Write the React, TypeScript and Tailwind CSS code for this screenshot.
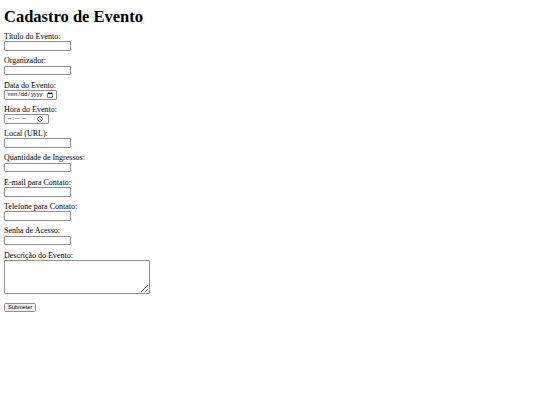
import React from 'react';

const fields: { label: string; type: string; w: string }[] = [
  { label: 'Título do Evento:', type: 'text', w: 'w-[67px]' },
  { label: 'Organizador:', type: 'text', w: 'w-[67px]' },
  { label: 'Data do Evento:', type: 'date', w: 'w-[53px]' },
  { label: 'Hora do Evento:', type: 'time', w: 'w-[45px]' },
  { label: 'Local (URL):', type: 'url', w: 'w-[67px]' },
  { label: 'Quantidade de Ingressos:', type: 'number', w: 'w-[67px]' },
  { label: 'E-mail para Contato:', type: 'email', w: 'w-[67px]' },
  { label: 'Telefone para Contato:', type: 'tel', w: 'w-[67px]' },
  { label: 'Senha de Acesso:', type: 'password', w: 'w-[67px]' },
];

export default function App() {
  return (
    <div className="min-h-[405px] w-[540px] bg-white px-[4px] pt-[8px] text-black font-['Liberation_Serif',serif]">
      <h1 className="text-[16.5px] font-bold leading-[18px]">Cadastro de Evento</h1>
      <form className="mt-[6px] flex flex-col" onSubmit={(e) => e.preventDefault()}>
        {fields.map((f) => (
          <div key={f.label} className="mb-[5.3px] flex flex-col items-start">
            <label className="text-[8px] leading-[9.2px]">{f.label}</label>
            <input
              type={f.type}
              className={`${f.w} h-[9.8px] border border-[#8f8f8f] rounded-[1px] bg-white px-[1.5px] text-[5.8px] leading-none font-['Liberation_Sans',sans-serif]`}
            />
          </div>
        ))}
        <div className="flex flex-col items-start">
          <label className="text-[8px] leading-[9.2px]">Descrição do Evento:</label>
          <textarea className="h-[34.5px] w-[145.5px] border border-[#8f8f8f] rounded-[1px] bg-white" />
        </div>
        <div className="mt-[8.5px] flex items-start">
          <button
            type="submit"
            className="h-[9.5px] rounded-[1.5px] border border-[#8f8f8f] bg-[#efefef] px-[3px] text-[5.6px] leading-none font-['Liberation_Sans',sans-serif]"
          >
            Submeter
          </button>
        </div>
      </form>
    </div>
  );
}
